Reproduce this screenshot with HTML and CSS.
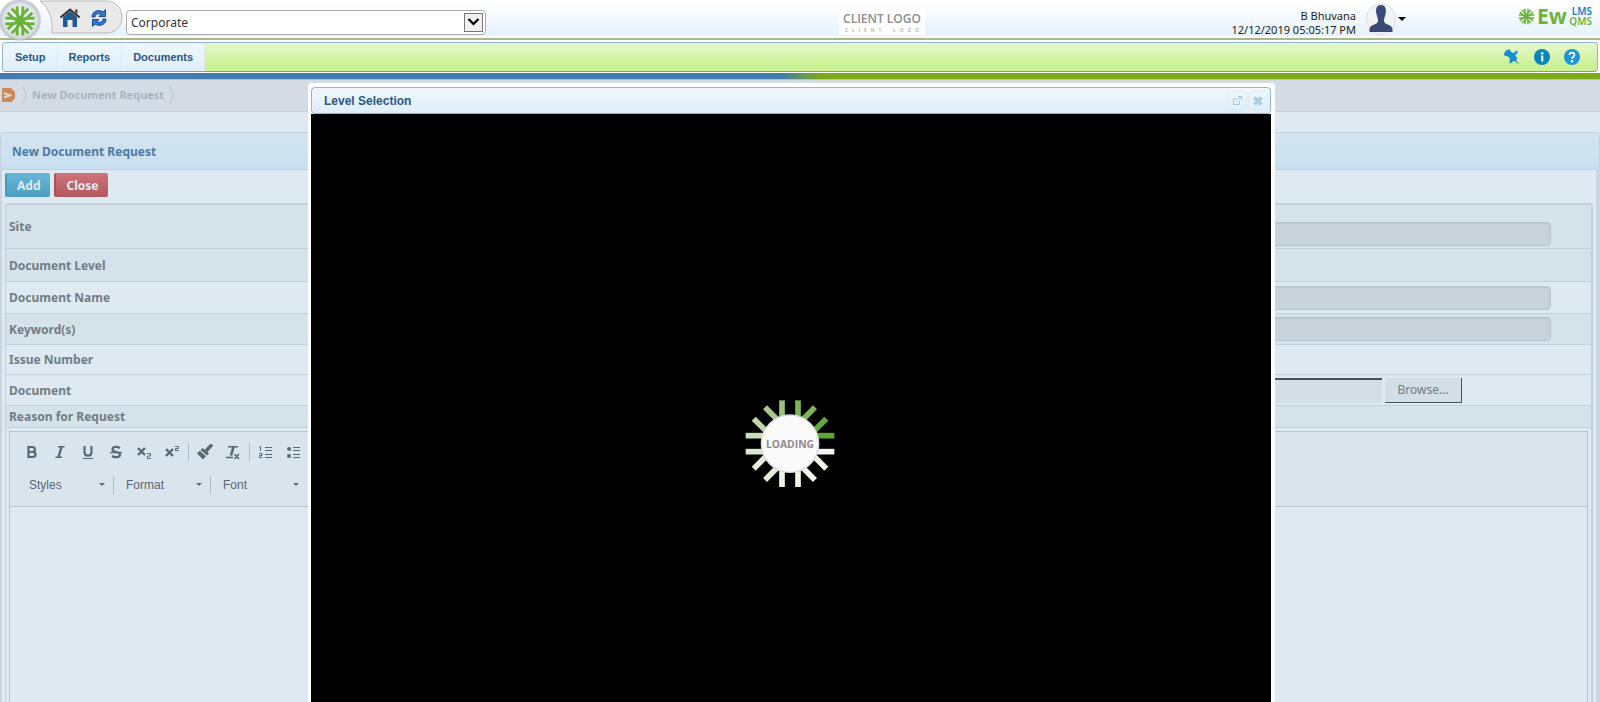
FILE: index.html
```html
<!DOCTYPE html>
<html lang="en">
<head>
<meta charset="utf-8">
<title>New Document Request</title>
<link rel="stylesheet" href="styles.css">
</head>
<body>
<svg class="defs" width="0" height="0" aria-hidden="true">
  <defs>
    <g id="ray"><path d="M-24 -124V-62L0 -8L24 -62V-124" fill="none" stroke-width="25"/></g>
    <symbol id="burst" viewBox="-136 -136 272 272">
      <use href="#ray"/><use href="#ray" transform="rotate(45)"/><use href="#ray" transform="rotate(90)"/><use href="#ray" transform="rotate(135)"/>
      <use href="#ray" transform="rotate(180)"/><use href="#ray" transform="rotate(225)"/><use href="#ray" transform="rotate(270)"/><use href="#ray" transform="rotate(315)"/>
    </symbol>
  </defs>
</svg>

<header class="top">
  <a class="brand" href="#" aria-label="Start"><svg class="burst"><use href="#burst"/></svg></a>
  <nav class="quick" aria-label="Quick links">
    <svg class="tab-shape" viewBox="0 0 84 34" preserveAspectRatio="none" aria-hidden="true"><path d="M0 1H68C77 2 82 9 82 17S77 32 68 33H12C13 22 11 10 0 1Z" fill="#e9e9ea" stroke="#b9b9b9"/></svg>
    <a href="#" aria-label="Home"><svg width="20" height="20" viewBox="0 0 20 20"><path d="M3 9L10 3L17 9V19H12.500V12H7.500V19H3Z" fill="#225a8f"/><path d="M.5 9.500L10 1.500L19.500 9.500" fill="none" stroke="#333" stroke-width="2"/><path d="M15 1.500H17.500V6L15 4Z" fill="#444"/></svg></a>
    <a href="#" aria-label="Refresh"><svg width="16" height="18" viewBox="0 0 16 18"><path d="M1 8C1 2 8 0 12 3L14.500 .500V7.500H8L10 5.200C7 4 4.500 5 4 8Z" fill="#3478c4" stroke="#174f9c" stroke-width="1"/><path d="M15 10C15 16 8 18 4 15L1.500 17.500V10.500H8L6 12.800C9 14 11.500 13 12 10Z" fill="#3478c4" stroke="#174f9c" stroke-width="1"/></svg></a>
  </nav>
  <div class="site-pick">
    <select aria-label="Site"><option>Corporate</option></select>
    <svg class="pick-arrow" width="19" height="19" viewBox="0 0 19 19" aria-hidden="true"><rect x=".5" y=".5" width="18" height="18" fill="#f0f0f0" stroke="#777"/><path d="M4.500 6L9.500 11L14.500 6" fill="none" stroke="#000" stroke-width="2.200"/></svg>
  </div>
  <div class="client"><span>CLIENT LOGO</span><span class="echo" aria-hidden="true">C L I E N T &nbsp; L O G O</span></div>
  <div class="user">
    <div class="who"><div>B Bhuvana</div><div>12/12/2019 05:05:17 PM</div></div>
    <button class="avatar" type="button" aria-label="User menu">
      <svg width="30" height="32" viewBox="0 0 30 32"><ellipse cx="15" cy="16" rx="14.500" ry="15.500" fill="#f3f3f3" stroke="#ddd"/><path d="M15 2C20 2 20.500 7 19.500 11C19 14 18 15 18 18C18 22 26 21 26.500 26V29H3.500V26C4 21 12 22 12 18C12 15 11 14 10.500 11C9.500 7 10 2 15 2Z" fill="#3a4a76"/></svg>
      <svg width="8" height="4" viewBox="0 0 8 4"><path d="M0 0H8L4 4Z" fill="#000"/></svg>
    </button>
  </div>
  <div class="product">
    <svg class="burst"><use href="#burst"/></svg>
    <span class="ew">Ew</span>
    <span class="stack"><span class="lms">LMS</span><span class="qms">QMS</span></span>
  </div>
</header>

<nav class="menu">
  <div class="menu-tabs"><a href="#">Setup</a><a href="#">Reports</a><a href="#">Documents</a></div>
  <div class="menu-tools">
    <a href="#" aria-label="Pin"><svg width="16" height="16" viewBox="0 0 16 16"><path d="M2 1.500L5.500 .3L7 2.800L9.500 4.200L12.500 1.500L14 3L11.300 6.200L13 9L13.200 10.500L11.500 10.800L15.500 15.500L9.800 11.800L6.500 14.500L5.500 13.500L5.800 9.200L3.500 7.200L.3 6.500L0 4.800Z" fill="#128fd0"/></svg></a>
    <a href="#" aria-label="Information"><svg width="16" height="16" viewBox="0 0 16 16"><circle cx="8" cy="8" r="8" fill="#0d83bb"/><rect x="7" y="6.500" width="2.400" height="6" fill="#d9efc0"/><circle cx="8.200" cy="4.300" r="1.400" fill="#d9efc0"/></svg></a>
    <a href="#" aria-label="Help"><svg width="16" height="16" viewBox="0 0 16 16"><circle cx="8" cy="8" r="8" fill="#1c94d8"/><path d="M5.500 6C5.500 2.800 10.700 2.800 10.500 6C10.500 7.800 8 7.800 8 9.800" fill="none" stroke="#fff" stroke-width="1.800"/><circle cx="8" cy="12.200" r="1.200" fill="#fff"/></svg></a>
  </div>
</nav>
<div class="strip"></div>

<main class="page">
  <nav class="crumbs" aria-label="Breadcrumb">
    <svg width="14" height="14" viewBox="0 0 14 14"><path d="M0 0H9L13 4V10L10 14H0Z" fill="#cc8a58"/><path d="M2 4L11 7.500L2 10.500V8.500L5 7.500L2 6.500Z" fill="#e9d3c2"/></svg>
    <svg class="sep" width="5" height="18" viewBox="0 0 5 18"><path d="M.5 0L4.500 9L.5 18" fill="none" stroke="#bcc7d0"/></svg>
    <span>New Document Request</span>
    <svg class="sep" width="5" height="18" viewBox="0 0 5 18"><path d="M.5 0L4.500 9L.5 18" fill="none" stroke="#bcc7d0"/></svg>
  </nav>

  <form class="panel">
    <h1>New Document Request</h1>
    <div class="panel-body">
      <div class="actions"><button class="add" type="button">Add</button><button class="close" type="button">Close</button></div>
      <div class="fields">
        <div class="row shade site"><label for="site">Site</label><input id="site" type="text"></div>
        <div class="row shade level"><span>Document Level</span></div>
        <div class="row name"><label for="name">Document Name</label><input id="name" type="text"></div>
        <div class="row shade"><label for="keys">Keyword(s)</label><input id="keys" type="text"></div>
        <div class="row number"><span>Issue Number</span></div>
        <div class="row"><label for="doc">Document</label><div class="file"><input id="doc" type="text"><button type="button">Browse...</button></div></div>
        <div class="row shade reason"><label for="reason">Reason for Request</label></div>
        <div class="editor">
          <div class="tools">
            <div class="tool-line">
              <button type="button" aria-label="Bold"><svg viewBox="0 0 16 16"><path d="M4.500 3V13H8.500C12.500 13 12.500 8 9 7.800C11.800 7.200 11.500 3 8.300 3Z" fill="none" stroke="#596873" stroke-width="2.200"/><path d="M4.500 7.900H9" stroke="#596873" stroke-width="1.800"/></svg></button>
              <button type="button" aria-label="Italic"><svg viewBox="0 0 16 16"><path d="M6 2.700H12.500M3.500 13.300H10" stroke="#596873" stroke-width="1.500"/><path d="M9.500 3L6.500 13" stroke="#596873" stroke-width="2.400"/></svg></button>
              <button type="button" aria-label="Underline"><svg viewBox="0 0 16 16"><path d="M4.500 2V8C4.500 12.800 11.500 12.800 11.500 8V2" fill="none" stroke="#596873" stroke-width="2.200"/><path d="M3 14.500H13" stroke="#596873"/></svg></button>
              <button type="button" aria-label="Strikethrough"><svg viewBox="0 0 16 16"><path d="M12 4C9 2 4.500 2.500 4.500 5.500C4.500 8.500 12 7.500 12 10.500C12 13.500 7 14 4 12" fill="none" stroke="#596873" stroke-width="2.200"/><path d="M2 8.500H14" stroke="#596873" stroke-width="1.400"/></svg></button>
              <button type="button" aria-label="Subscript"><svg viewBox="0 0 16 16"><path d="M2 4L9 11M9 4L2 11" stroke="#596873" stroke-width="2.400"/><path d="M11 9.500H14.500V12H11.500V14.500H15" fill="none" stroke="#596873"/></svg></button>
              <button type="button" aria-label="Superscript"><svg viewBox="0 0 16 16"><path d="M2 5L9 12M9 5L2 12" stroke="#596873" stroke-width="2.400"/><path d="M11 2.500H14.500V4.500H11.500V6.500H15" fill="none" stroke="#596873"/></svg></button>
              <i></i>
              <button type="button" aria-label="Copy formatting"><svg viewBox="0 0 16 16"><path d="M15 .500L9 7" stroke="#596873" stroke-width="3.500"/><path d="M5.500 4L12 9.500L10 11.500L3.500 6Z" fill="#596873"/><path d="M2.800 6.800L9 12.200L6 15.500L0 9.500Z" fill="#596873"/></svg></button>
              <button type="button" aria-label="Remove format"><svg viewBox="0 0 16 16"><path d="M3 2.700H13M1 13.500H8" stroke="#596873" stroke-width="1.500"/><path d="M8.500 3L6 11.500" stroke="#596873" stroke-width="2.600"/><path d="M9.500 10L14 15M14 10L9.500 15" stroke="#596873" stroke-width="1.500"/></svg></button>
              <i></i>
              <button type="button" aria-label="Numbered list"><svg viewBox="0 0 16 16"><path d="M7 3.500H14M7 6.500H14M7 10.500H14M7 13.500H14M2.500 2.500V7M1.500 3H3M1 9.500H4V11.500H1.500V13.500H4.500" fill="none" stroke="#596873"/></svg></button>
              <button type="button" aria-label="Bulleted list"><svg viewBox="0 0 16 16"><circle cx="3" cy="5" r="2" fill="#596873"/><circle cx="3" cy="12" r="2" fill="#596873"/><path d="M7 3.500H14M7 6.500H14M7 10.500H14M7 13.500H14" stroke="#596873"/></svg></button>
            </div>
            <div class="tool-line combos">
              <button type="button">Styles</button><i></i><button type="button">Format</button><i></i><button type="button">Font</button>
            </div>
          </div>
          <textarea id="reason"></textarea>
        </div>
      </div>
    </div>
  </form>
</main>

<section class="dialog" role="dialog" aria-labelledby="dialog-title">
  <header class="dialog-head">
    <h2 id="dialog-title">Level Selection</h2>
    <div class="dialog-tools">
      <button type="button" aria-label="Open in window"><svg width="9" height="9" viewBox="0 0 9 9"><path d="M4 2.500H.5V8.500H6.500V5M5 .5H8.500V4M8.500 .5L3.500 5.500" fill="none" stroke="#9fc6e2"/></svg></button>
      <button type="button" aria-label="Close dialog"><svg width="10" height="10" viewBox="0 0 10 10"><path d="M1.500 1.500L8.500 8.500M8.500 1.500L1.500 8.500" stroke="#a9cbe4" stroke-width="3.600"/></svg></button>
    </div>
  </header>
  <div class="dialog-body">
    <svg width="140" height="120" viewBox="-210 -191 420 360" role="img" aria-label="LOADING">
      <g fill="none" stroke-width="17">
        <path d="M24 -130V-70" stroke="#7eb45a"/><path d="M24 -130V-70" transform="rotate(45)" stroke="#68a741"/><path d="M-24 -130V-70" transform="rotate(45)" stroke="#7fb45b"/>
        <path d="M-24 -133V-70" transform="rotate(90)" stroke="#5ea534"/><path d="M24 -133V-70" transform="rotate(90)" stroke="#f3f7ef"/>
        <path d="M-24 -130V-70M24 -130V-70" transform="rotate(135)" stroke="#f1f6ed"/>
        <path d="M-24 -130V-70M24 -130V-70" transform="rotate(180)" stroke="#edf3e7"/>
        <path d="M-24 -130V-70M24 -130V-70" transform="rotate(225)" stroke="#e4edda"/>
        <path d="M-24 -133V-70" transform="rotate(270)" stroke="#dce8d1"/><path d="M24 -133V-70" transform="rotate(270)" stroke="#cdddbb"/>
        <path d="M-24 -130V-70" transform="rotate(315)" stroke="#bfd6aa"/><path d="M24 -130V-70" transform="rotate(315)" stroke="#a9c98c"/>
        <path d="M-24 -130V-70" stroke="#9ac37c"/>
      </g>
      <circle r="86" fill="#fafafa" stroke="#ddd6da" stroke-width="4"/>
      <text class="loading" y="14" text-anchor="middle">LOADING</text>
    </svg>
  </div>
</section>
</body>
</html>
```
FILE: styles.css
```css
* { box-sizing: border-box; }
html, body { height: 100%; }
body {
  margin: 0;
  display: flex;
  flex-direction: column;
  overflow: hidden;
  background: #fff;
  color: #222;
  font: 13px "Noto Sans", "Open Sans", sans-serif;
}
a { color: inherit; text-decoration: none; }
button { margin: 0; padding: 0; border: 0; background: none; font: inherit; color: inherit; }
svg { display: block; flex: none; }
.defs { position: absolute; }

.top {
  position: relative;
  flex: none;
  display: flex;
  align-items: flex-start;
  height: 40px;
  border-bottom: 2px solid #adb58f;
  background: linear-gradient(#fff 10%, #e4f1fb 95%, #fff 96%);
}
.brand {
  flex: none;
  z-index: 1;
  width: 40px;
  height: 40px;
  padding: 5px 4px 3px;
  border-radius: 50%;
  background: radial-gradient(#fff 30%, #d9dee2 60%, #b5bcc2 72%);
  box-shadow: 0 0 2px #888;
}
.burst { width: 32px; height: 32px; stroke: #68b339; }
.quick {
  position: relative;
  flex: none;
  display: flex;
  align-items: center;
  gap: 11px;
  width: 84px;
  height: 34px;
  padding: 2px 0 0 20px;
}
.quick a { position: relative; }
.tab-shape { position: absolute; inset: 0; width: 100%; height: 100%; }
.site-pick { position: relative; flex: none; width: 360px; margin: 10px 0 0 2px; }
.site-pick select {
  appearance: none;
  width: 100%;
  height: 25px;
  padding: 0 24px 0 4px;
  border: 1px solid #aaa;
  border-radius: 4px;
  background: #fff;
  color: #333;
  font: 12px "Noto Sans", sans-serif;
}
.pick-arrow { position: absolute; right: 3px; top: 3px; pointer-events: none; }
.client {
  flex: none;
  display: flex;
  flex-direction: column;
  align-items: center;
  width: 86px;
  height: 25px;
  margin: 10px 0 0 353px;
  background: #fff;
  color: #8c8c8c;
  font: 12px/18px "Open Sans", sans-serif;
  font-weight: 600;
}
.echo { width: 74px; font-size: 5px; line-height: 5px; text-align-last: justify; white-space: nowrap; color: #aaa; }
.user { display: flex; gap: 10px; margin-left: auto; padding-top: 1px; }
.who { padding-top: 8px; text-align: right; font-size: 11px; line-height: 14px; color: #222; }
.avatar { display: flex; align-items: center; gap: 2px; }
.product { display: flex; align-items: center; width: 74px; margin: 4px 8px 0 112px; height: 24px; color: #6db33c; }
.product .burst { width: 17px; height: 17px; }
.ew { margin-left: 2px; font: bold 21px/24px "Noto Sans", sans-serif; }
.stack { display: flex; flex-direction: column; align-items: flex-end; margin-left: auto; font: 10px/10px "Noto Sans", sans-serif; font-weight: 600; }
.lms { color: #1c7fc0; }

.menu {
  flex: none;
  display: flex;
  justify-content: space-between;
  height: 30px;
  margin: 2px 2px 1px;
  border: 1px solid #8fb4d4;
  border-bottom-color: #74b743;
  border-radius: 4px;
  background: linear-gradient(#e6f8cc, #cbf195 80%);
  overflow: hidden;
}
.menu-tabs { display: flex; }
.menu-tabs a {
  padding: 0 11px;
  border-right: 1px solid #e2e8ea;
  background: linear-gradient(#eff7fd, #dfeefa);
  color: #2a5785;
  font: bold 11px/28px "Liberation Sans", Arial, sans-serif;
}
.menu-tabs a:first-child { padding-left: 12px; }
.menu-tools { display: flex; align-items: center; gap: 14px; padding-right: 17px; }
.strip { flex: none; height: 7px; background: linear-gradient(90deg, #447bad 780px, #7cab17 822px); border-bottom: 1px solid #a9c9b4; }

.page { flex: 1; min-height: 0; display: flex; flex-direction: column; background: #dee9f1; }
.crumbs {
  flex: none;
  display: flex;
  align-items: center;
  height: 32px;
  padding: 0 2px 2px;
  border-bottom: 1px solid #c3ced8;
  background: #d3dce5;
  color: #a9b4be;
  font: bold 11px "Noto Sans", sans-serif;
}
.crumbs span { padding: 0 5px; }
.sep:nth-child(2) { margin-left: 6px; }

.panel { flex: 1; min-height: 0; display: flex; flex-direction: column; margin-top: 20px; }
h1 {
  flex: none;
  height: 38px;
  margin: 0;
  padding: 1px 0 0 11px;
  border: 1px solid #c3d1de;
  border-radius: 4px 4px 0 0;
  background: linear-gradient(#d5e4ef, #c8dff0);
  color: #4c7aa5;
  font: bold 12px/36px "Noto Sans", sans-serif;
}
.panel-body {
  flex: 1;
  min-height: 0;
  display: flex;
  flex-direction: column;
  padding: 3px 3px 0;
  border: solid #cad5df;
  border-width: 0 4px 0 2px;
}
.actions { display: flex; gap: 4px; height: 30px; }
.actions button { height: 24px; padding: 1px 10px 0; border-radius: 2px; color: #e1eaf1; font: bold 12px/23px "Noto Sans", sans-serif; }
.actions .add { border-left: 2px solid #459ab9; background: linear-gradient(#68b7d8, #4b9fc0); }
.actions .close { border-left: 2px solid #b04e56; background: linear-gradient(#d0737b, #b1595f); }
.fields {
  flex: 1;
  min-height: 0;
  display: flex;
  flex-direction: column;
  border: 1px solid #c5d1da;
  border-width: 2px 2px 0 1px;
  border-radius: 3px 3px 0 0;
}
.row {
  flex: none;
  display: grid;
  grid-template-columns: 400px 1fr;
  align-items: center;
  height: 31px;
  padding: 0 40px 0 3px;
  border-bottom: 1px solid #c5d1da;
  color: #727c85;
  font: bold 12px "Noto Sans", sans-serif;
}
.shade { background: #d6e2ea; }
.site { height: 44px; }
.site input { margin-top: 14px; }
.level { height: 33px; }
.name { height: 32px; }
.number { height: 30px; }
.reason { height: 22px; }
.row input { width: 100%; height: 24px; border: 1px solid #b8c5cf; border-radius: 4px; background: #c9d3dc; box-shadow: inset 0 1px 2px #b8c5cf; }
.file { display: flex; gap: 3px; padding-right: 89px; }
.file input { flex: 1; height: 25px; border: 0; border-top: 2px solid #46515a; border-radius: 0; background: #d3dee7; box-shadow: none; }
.file button { width: 77px; height: 25px; border: solid #46515a; border-width: 0 1px 1px 0; background: #d3dee7; font-weight: 400; }
.editor { flex: 1; min-height: 0; display: flex; flex-direction: column; margin: 3px 3px 0; border: 1px solid #b9c5cf; border-bottom: 0; }
.tools { flex: none; height: 75px; padding: 3px 8px; border-bottom: 1px solid #b9c5cf; background: #dae4ec; }
.tool-line { display: flex; align-items: center; height: 33px; }
.tool-line svg { width: 16px; height: 16px; }
.tool-line button { width: 28px; padding: 0 6px; }
.tool-line i { width: 1px; height: 18px; margin: 0 2px; background: #aebac4; }
.combos button {
  display: flex;
  align-items: center;
  justify-content: space-between;
  width: 94px;
  padding: 0 7px 0 11px;
  color: #596873;
  font: 12px "Liberation Sans", Arial, sans-serif;
}
.combos i { margin: 0 1px; }
.combos button::after { content: ""; border: solid transparent; border-width: 3px 3px 0; border-top-color: #596873; }
textarea { flex: 1; width: 100%; border: 0; background: #dee9f1; resize: none; }

.dialog {
  position: fixed;
  top: 83px;
  right: 325px;
  bottom: 0;
  left: 308px;
  display: flex;
  flex-direction: column;
  padding: 4px 4px 0 3px;
  border-radius: 4px 4px 0 0;
  background: #fff;
}
.dialog-head {
  flex: none;
  display: flex;
  align-items: center;
  justify-content: space-between;
  height: 27px;
  padding: 0 2px 0 12px;
  border: 1px solid #8fb4d4;
  border-radius: 4px;
  background: linear-gradient(#eff7fd, #dfeefa);
}
h2 { margin: 0; color: #2a5785; font: bold 12px "Liberation Sans", Arial, sans-serif; }
.dialog-tools { display: flex; gap: 1px; }
.dialog-tools button { display: flex; align-items: center; justify-content: center; width: 20px; height: 19px; border: 1px solid #e2eaf0; border-radius: 4px; }
.dialog-body { flex: 1; display: flex; justify-content: center; align-items: flex-start; padding: 266px 3px 0 0; background: #000; overflow: hidden; }
.loading { fill: #8d8d8d; font: bold 31px "Open Sans", sans-serif; }
```
